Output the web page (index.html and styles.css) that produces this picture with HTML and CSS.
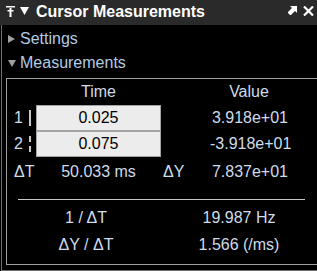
FILE: index.html
```html
<!DOCTYPE html>
<html lang="en">
<head>
    <meta charset="UTF-8">
    <meta name="viewport" content="width=device-width, initial-scale=1">
    <title>Cursor Measurements</title>
    <link rel="stylesheet" href="styles.css">
</head>
<body>
    <div class="titlebar">
        <svg class="pin" width="9" height="11" viewBox="0 0 9 11">
            <rect x="0" y="0" width="9" height="1.5" fill="#fff"/>
            <rect x="1.5" y="4" width="6" height="1.5" fill="#fff"/>
            <rect x="3.5" y="2" width="2" height="9" fill="#fff"/>
        </svg>
        <svg class="collapse" width="9" height="8" viewBox="0 0 9 8">
            <polygon points="0,0 9,0 4.5,8" fill="#fff"/>
        </svg>
        <span class="title">Cursor Measurements</span>
        <span class="spacer"></span>
        <svg class="undock" width="9" height="9" viewBox="0 0 9 9">
            <polygon points="2,0 9,0 9,7 7,5 2.5,9.5 -0.5,6.5 4,2" fill="#fff"/>
        </svg>
        <svg class="close" width="11" height="10" viewBox="0 0 11 10">
            <path d="M1 0.5 L10 9.5 M10 0.5 L1 9.5" stroke="#fff" stroke-width="2.2"/>
        </svg>
    </div>

    <div class="content">
        <div class="section"><span class="arrow right"></span>Settings</div>
        <div class="section"><span class="arrow down"></span>Measurements</div>

        <div class="panel">
            <div class="grid">
                <div></div>
                <div class="head">Time</div>
                <div></div>
                <div class="head">Value</div>

                <div class="cursor">1<span class="mark solid"></span></div>
                <div class="cell">0.025</div>
                <div></div>
                <div class="num">3.918e+01</div>

                <div class="cursor">2<span class="mark dashed"></span></div>
                <div class="cell">0.075</div>
                <div></div>
                <div class="num">-3.918e+01</div>

                <div class="cursor delta">ΔT</div>
                <div class="mid delta">50.033 ms</div>
                <div class="label delta">ΔY</div>
                <div class="num delta">7.837e+01</div>
            </div>

            <div class="sep"></div>

            <div class="stats">
                <div>1 / ΔT</div>
                <div>19.987 Hz</div>
                <div>ΔY / ΔT</div>
                <div>1.566 (/ms)</div>
            </div>
        </div>
    </div>
</body>
</html>
```

FILE: styles.css
```css
body {
    margin: 0;
    width: 317px;
    height: 271px;
    overflow: hidden;
    background-color: #000;
    font-family: 'Liberation Sans', Arial, sans-serif;
    font-size: 16px;
}

.titlebar {
    height: 25px;
    display: flex;
    align-items: center;
    background-color: #2a2a2a;
    color: #fff;
}

.pin {
    margin-left: 6px;
    margin-bottom: 3px;
}

.collapse {
    margin-left: 5px;
    margin-bottom: 4px;
}

.title {
    margin-left: 7px;
    font-weight: bold;
    font-size: 16px;
    margin-bottom: 2px;
}

.spacer {
    flex: 1;
}

.undock {
    margin-bottom: 4px;
}

.close {
    margin-left: 6px;
    margin-right: 3px;
    margin-bottom: 4px;
}

.content {
    margin-left: 1px;
    height: 246px;
    box-sizing: border-box;
    padding-top: 2px;
    border-left: 1px solid #6e6e6e;
    border-bottom: 1px solid #6e6e6e;
}

.section {
    height: 24px;
    line-height: 24px;
    display: flex;
    align-items: center;
    color: #b3cbe4;
}

.arrow {
    width: 0;
    height: 0;
    margin-left: 6px;
    margin-right: 5px;
}

.arrow.right {
    border-top: 4px solid transparent;
    border-bottom: 4px solid transparent;
    border-left: 7px solid #a0a0a0;
}

.arrow.down {
    margin-right: 4px;
    border-left: 4px solid transparent;
    border-right: 4px solid transparent;
    border-top: 7px solid #a0a0a0;
}

.panel {
    margin-top: 3px;
    margin-left: 4px;
    height: 187px;
    box-sizing: border-box;
    border: 1px solid #a0a0a0;
    border-right: none;
    color: #cfdcea;
}

.grid {
    display: grid;
    grid-template-columns: 29px 125px 49px 78px;
    grid-template-rows: 26px 26px 26px 30px;
}

.head {
    line-height: 26px;
    text-align: center;
}

.cursor {
    display: flex;
    align-items: center;
    padding-left: 7px;
}

.mark {
    width: 0;
    height: 16px;
    margin-left: 6px;
}

.mark.solid {
    border-left: 2px solid #c8c8c8;
}

.mark.dashed {
    border-left: 2px dashed #c8c8c8;
}

.cell {
    border: 1px solid #a3a3a3;
    background-color: #ececec;
    color: #000;
    text-align: center;
    line-height: 24px;
}

.num {
    text-align: right;
    line-height: 26px;
}

.mid {
    text-align: center;
}

.label {
    padding-left: 2px;
}

.delta {
    line-height: 30px;
}

.sep {
    margin: 12px 0 0 11px;
    width: 287px;
    height: 1px;
    background-color: #c8c8c8;
}

.stats {
    margin: 4px 0 0 11px;
    display: grid;
    grid-template-columns: 136px 170px;
    grid-auto-rows: 27px;
    line-height: 27px;
    text-align: center;
}
```
